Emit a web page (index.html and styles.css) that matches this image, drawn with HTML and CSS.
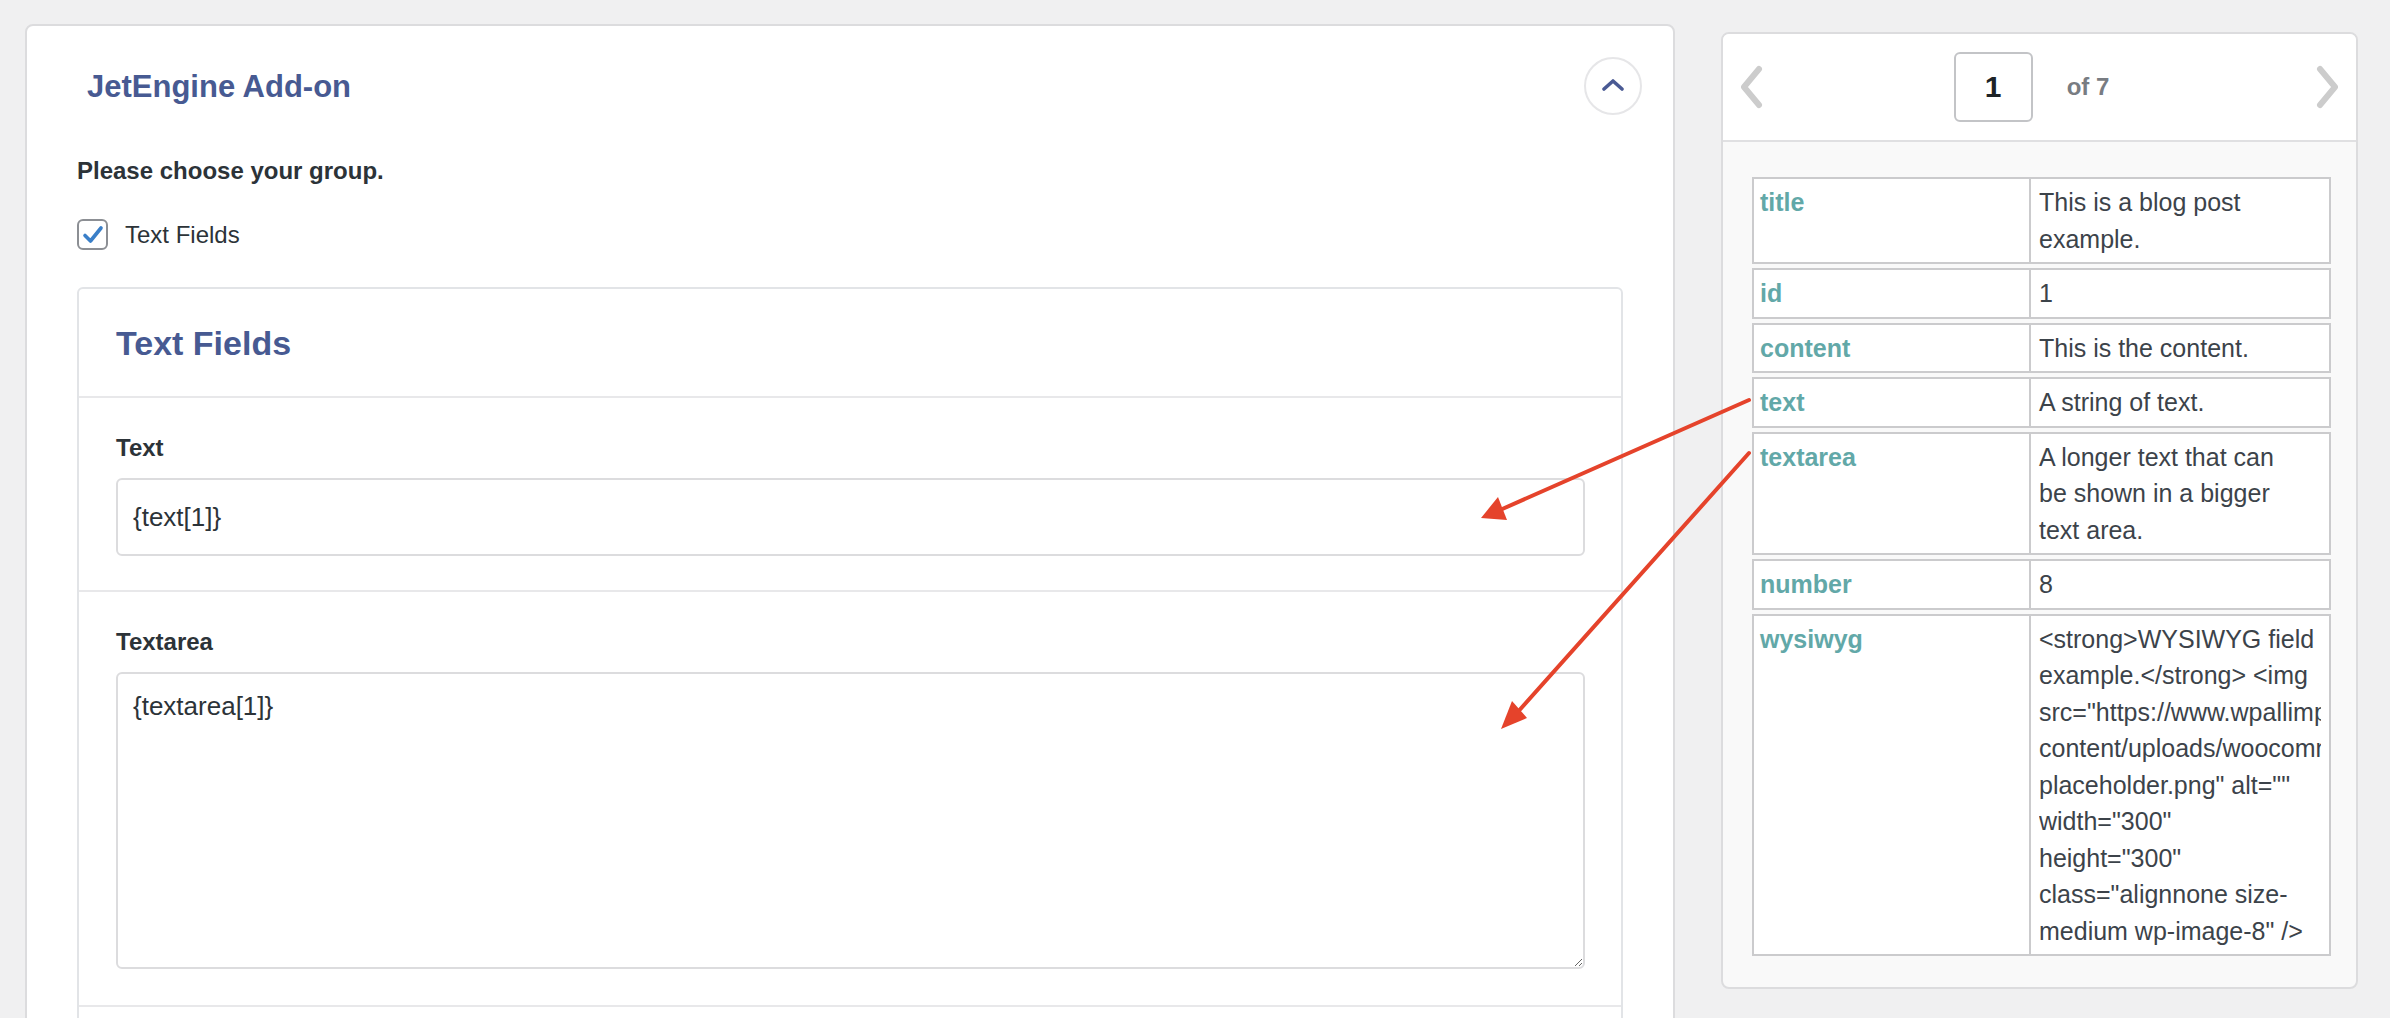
FILE: index.html
```html
<!DOCTYPE html>
<html lang="en">
<head>
<meta charset="utf-8">
<title>JetEngine Add-on</title>
<link rel="stylesheet" href="styles.css">
</head>
<body>
<div class="page">
  <section class="card main">
    <header class="card-head">
      <h2 class="card-title">JetEngine Add-on</h2>
      <span class="collapse">
        <svg width="22" height="12" viewBox="0 0 22 12"><path d="M2 10 L11 2 L20 10" fill="none" stroke="#4a5a94" stroke-width="3.6" stroke-linecap="round" stroke-linejoin="round"/></svg>
      </span>
    </header>
    <div class="card-body">
      <p class="prompt">Please choose your group.</p>
      <div class="check">
        <span class="box"><svg width="22" height="20" viewBox="0 0 22 20"><path d="M3 10.5 L8.5 16 L19 3" fill="none" stroke="#3a7fc8" stroke-width="3.6" stroke-linecap="round" stroke-linejoin="round"/></svg></span>
        <span class="check-label">Text Fields</span>
      </div>
      <div class="panel">
        <h3 class="panel-title">Text Fields</h3>
        <div class="field">
          <div class="field-label">Text</div>
          <input class="text-input" type="text" value="{text[1]}" readonly>
        </div>
        <div class="field last">
          <div class="field-label">Textarea</div>
          <textarea class="text-area" readonly>{textarea[1]}</textarea>
        </div>
        <div class="field filler"></div>
      </div>
    </div>
  </section>

  <aside class="card preview">
    <div class="pager">
      <svg class="chev" width="26" height="44" viewBox="0 0 26 44"><path d="M21 4 L6 22 L21 40" fill="none" stroke="#cccccc" stroke-width="6" stroke-linecap="round" stroke-linejoin="round"/></svg>
      <div class="pager-mid">
        <span class="page-box">1</span>
        <span class="page-of">of 7</span>
      </div>
      <svg class="chev" width="26" height="44" viewBox="0 0 26 44"><path d="M5 4 L20 22 L5 40" fill="none" stroke="#cccccc" stroke-width="6" stroke-linecap="round" stroke-linejoin="round"/></svg>
    </div>
    <div class="preview-body">
      <table class="data">
        <colgroup><col class="col-k"><col class="col-v"></colgroup>
        <tr><td class="k">title</td><td class="v">This is a blog post<br>example.</td></tr>
        <tr><td class="k">id</td><td class="v">1</td></tr>
        <tr><td class="k">content</td><td class="v">This is the content.</td></tr>
        <tr><td class="k">text</td><td class="v">A string of text.</td></tr>
        <tr><td class="k">textarea</td><td class="v">A longer text that can<br>be shown in a bigger<br>text area.</td></tr>
        <tr><td class="k">number</td><td class="v">8</td></tr>
        <tr><td class="k">wysiwyg</td><td class="v"><div class="clip">&lt;strong&gt;WYSIWYG field<br>example.&lt;/strong&gt; &lt;img<br>src="https://www.wpallimport.com/wp-<br>content/uploads/woocommerce-<br>placeholder.png" alt=""<br>width="300"<br>height="300"<br>class="alignnone size-<br>medium wp-image-8" /&gt;</div></td></tr>
      </table>
    </div>
  </aside>
</div>

<svg class="arrows" width="2390" height="1018" viewBox="0 0 2390 1018">
  <line x1="1749" y1="400" x2="1500" y2="510" stroke="#e5432b" stroke-width="4" stroke-linecap="round"/>
  <polygon points="1481,518 1498,497 1507,520" fill="#e5432b"/>
  <line x1="1749" y1="453" x2="1516" y2="714" stroke="#e5432b" stroke-width="4" stroke-linecap="round"/>
  <polygon points="1501,729 1512,701 1527,718" fill="#e5432b"/>
</svg>
</body>
</html>
```

FILE: styles.css
```css
html, body {
  margin: 0;
  padding: 0;
}
body {
  background: #f0f0f1;
  font-family: "Liberation Sans", Arial, sans-serif;
  color: #3c434a;
  width: 2390px;
  height: 1018px;
  overflow: hidden;
  position: relative;
}
.page {
  display: flex;
  align-items: flex-start;
  gap: 46px;
  padding: 24px 0 0 25px;
}
.card {
  background: #fff;
  border: 2px solid #dcdcde;
  border-radius: 8px;
  box-sizing: border-box;
}
.main {
  width: 1650px;
  flex: none;
}
.card-head {
  display: flex;
  align-items: center;
  justify-content: space-between;
  padding: 31px 31px 0 60px;
  height: 58px;
}
.card-title {
  margin: 0;
  font-size: 31px;
  line-height: 1;
  font-weight: bold;
  color: #475a92;
}
.collapse {
  width: 58px;
  height: 58px;
  box-sizing: border-box;
  border: 2px solid #e6e6e8;
  border-radius: 50%;
  display: flex;
  align-items: center;
  justify-content: center;
}
.collapse svg {
  margin-top: -3px;
}
.card-body {
  padding: 0 50px;
}
.prompt {
  margin: 41px 0 0;
  font-size: 24px;
  line-height: 30px;
  font-weight: bold;
  color: #2c3338;
}
.check {
  display: flex;
  align-items: center;
  gap: 17px;
  margin-top: 33px;
  height: 31px;
}
.box {
  width: 31px;
  height: 31px;
  box-sizing: border-box;
  border: 2px solid #8c8f94;
  border-radius: 6px;
  display: flex;
  align-items: center;
  justify-content: center;
}
.check-label {
  font-size: 24px;
  color: #2c3338;
}
.panel {
  margin-top: 37px;
  border: 2px solid #e2e4e7;
  border-radius: 6px;
}
.panel-title {
  margin: 0;
  padding: 32px 37px 31px;
  font-size: 34px;
  line-height: 44px;
  font-weight: bold;
  color: #475a92;
  border-bottom: 2px solid #e8e8ea;
}
.field {
  padding: 35px 36px 34px 37px;
  border-bottom: 2px solid #e8e8ea;
}
.field.last {
  padding-bottom: 36px;
}
.field.filler {
  height: 120px;
  border-bottom: none;
}
.field-label {
  font-size: 24px;
  line-height: 30px;
  font-weight: bold;
  color: #2c3338;
  margin-bottom: 15px;
}
.text-input,
.text-area {
  display: block;
  width: 100%;
  box-sizing: border-box;
  border: 2px solid #dcdcde;
  border-radius: 6px;
  background: #fff;
  font-family: "Liberation Sans", Arial, sans-serif;
  font-size: 26px;
  color: #2c3338;
  outline: none;
  margin: 0;
}
.text-input {
  height: 78px;
  padding: 0 15px;
}
.text-area {
  height: 297px;
  padding: 14px 15px;
  line-height: 36px;
  resize: both;
}

.preview {
  width: 637px;
  flex: none;
  margin-top: 8px;
  background: #f9f9f9;
  overflow: hidden;
}
.pager {
  background: #fff;
  height: 106px;
  border-bottom: 2px solid #e0e0e2;
  display: flex;
  align-items: center;
  padding: 0 15px;
}
.chev {
  flex: none;
}
.pager-mid {
  flex: 1;
  display: flex;
  align-items: center;
  justify-content: center;
  padding-right: 16px;
}
.page-box {
  width: 79px;
  height: 70px;
  box-sizing: border-box;
  border: 2px solid #c3c4c7;
  border-radius: 6px;
  display: flex;
  align-items: center;
  justify-content: center;
  font-size: 30px;
  font-weight: bold;
  color: #1d2327;
}
.page-of {
  margin-left: 34px;
  font-size: 24px;
  font-weight: bold;
  color: #787c82;
}
.preview-body {
  padding: 31px 25px 27px 29px;
}
.data {
  width: 100%;
  table-layout: fixed;
  border-collapse: separate;
  border-spacing: 0 4px;
  margin: 0;
}
.col-k {
  width: 279px;
}
.data td {
  background: #fff;
  border: 2px solid #cbcbcd;
  vertical-align: top;
  padding: 5px 8px 5px 6px;
  font-size: 25px;
  line-height: 36.5px;
}
.data td.k {
  font-weight: bold;
  color: #62a8a8;
}
.data td.v {
  border-left: none;
  padding-left: 8px;
  color: #3c434a;
  overflow: hidden;
}
.clip {
  white-space: nowrap;
  overflow: hidden;
}

.arrows {
  position: absolute;
  left: 0;
  top: 0;
  pointer-events: none;
}
```
